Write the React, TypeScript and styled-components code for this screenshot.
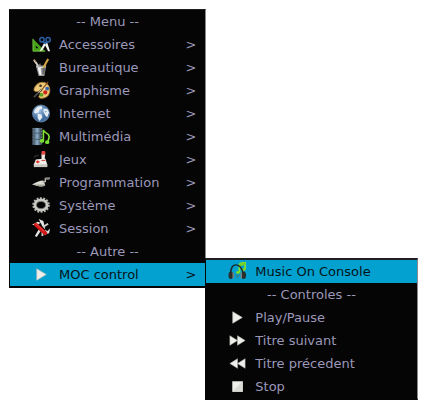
import React from "react";
import styled, { createGlobalStyle, css } from "styled-components";

const GlobalStyle = createGlobalStyle`
  * {
    box-sizing: border-box;
  }
  body {
    margin: 0;
    background: #ffffff;
    font-family: "DejaVu Sans", sans-serif;
    font-size: 13px;
    line-height: 23px;
  }
`;

const Desktop = styled.main`
  min-height: 100vh;
  padding: 9px;
`;

const panel = css`
  width: max-content;
  background: #050505;
  color: #9b98b9;
  border-style: solid;
  border-color: #202020 #8a8a8a #050505 #050505;
`;

const RootMenu = styled.nav`
  ${panel}
  border-width: 1px 1px 2px 1px;
`;

const SubMenu = styled.div`
  ${panel}
  position: absolute;
  top: -5px;
  left: 100%;
  border-width: 2px 1px 2px 1px;
`;

const List = styled.ul`
  margin: 0;
  padding: 0;
  list-style: none;
`;

const Row = styled.li`
  position: relative;
`;

const Heading = styled.h2`
  height: 23px;
  margin: 0;
  font-size: 13px;
  font-weight: 400;
  line-height: 23px;
  text-align: center;
`;

const Item = styled.button<{ $active?: boolean; $nested?: boolean }>`
  display: flex;
  align-items: center;
  gap: 8px;
  width: 100%;
  height: 23px;
  margin: 0;
  padding: 0 ${(p) => (p.$nested ? 46 : 9)}px 0 22px;
  border: 0;
  background: ${(p) => (p.$active ? "#03a1cf" : "transparent")};
  color: ${(p) => (p.$active ? "#061318" : "inherit")};
  font: inherit;
  line-height: 23px;
  text-align: left;
  white-space: nowrap;
`;

const Glyph = styled.svg`
  display: block;
  flex: none;
  width: 19px;
  height: 19px;
`;

const Label = styled.span`
  flex: 1;
`;

const Arrow = styled.span`
  padding-left: 18px;
`;

function Tools() {
  return (
    <Glyph viewBox="0 0 20 20" aria-hidden="true">
      <path fillRule="evenodd" d="M1 4 14 17H1ZM4 11v3h3Z" fill="#48a51b" />
      <path d="M1 4v13h13" fill="none" stroke="#75bd45" />
      <path d="m13 8-5 9 3-1 3-5 3 6h2l-3-9Z" fill="#f1f3ee" />
      <circle cx="10.5" cy="5" r="2.3" fill="none" stroke="#2b62a8" strokeWidth="1.5" />
      <circle cx="17" cy="5" r="2.3" fill="none" stroke="#2b62a8" strokeWidth="1.5" />
      <path d="m12 7 2 2 2-2" fill="none" stroke="#2b62a8" strokeWidth="1.6" />
    </Glyph>
  );
}

function PencilCup() {
  return (
    <Glyph viewBox="0 0 20 20" aria-hidden="true">
      <path d="m2 2 5 7" stroke="#d9d7cc" strokeWidth="2" />
      <path d="m2 1 2 3" stroke="#92631f" />
      <path d="m8 6 1 4" stroke="#666" strokeWidth="2" />
      <path d="M4 8h11l-2 11H7Z" fill="#9b9b9b" />
      <path d="M6 10h3l1 8H8Z" fill="#f4f4f4" />
      <path d="m11 10 3 0-1 7h-2Z" fill="#666" />
      <path d="M4.500 8.500c2 2 8 2 10 0" fill="none" stroke="#e2e2e2" />
      <path d="m17 1-5 9" stroke="#d3a33f" strokeWidth="2.2" />
    </Glyph>
  );
}

function Palette() {
  return (
    <Glyph viewBox="0 0 20 20" aria-hidden="true">
      <path d="M4 5C7 0 16 0 18 6c2 5 0 11-6 12-4 1-6-1-4-3 2-3-1-4-4-4C1 11 2 7 4 5Z" fill="#edc878" stroke="#a77a35" />
      <circle cx="9" cy="5" r="1.4" fill="#3c3020" />
      <path d="M11 6h3v3h-3Z" fill="#f2e5bd" />
      <circle cx="16" cy="8" r="2" fill="#3265b2" />
      <circle cx="14" cy="12" r="2.2" fill="#ce2420" />
      <circle cx="10" cy="14.5" r="2" fill="#57a424" />
      <path d="M17 1 9 11" stroke="#8a5523" strokeWidth="1.4" />
      <path d="M10 9 2 17" stroke="#4d4a46" strokeWidth="2" />
      <path d="m10 9-3 3" stroke="#d8c69a" />
    </Glyph>
  );
}

function Globe() {
  return (
    <Glyph viewBox="0 0 20 20" aria-hidden="true">
      <defs>
        <radialGradient id="globe-water" cx=".35" cy=".3">
          <stop offset="0" stopColor="#a9c9ed" />
          <stop offset="1" stopColor="#426f9f" />
        </radialGradient>
      </defs>
      <circle cx="9.500" cy="10" r="9" fill="url(#globe-water)" stroke="#7796b8" strokeWidth=".7" />
      <path d="m3 6 3-3 4-1 1 3-3 1-1 3-3 1-2-1ZM6 10l4 1 1 3-3 4-2-3ZM12 5l4 0 2 4-2 5-2-2-2-4Z" fill="#e6edf3" />
      <path d="m13 7 3 1-2 1Z" fill="#7fa4cb" />
    </Glyph>
  );
}

function Media() {
  return (
    <Glyph viewBox="0 0 20 20" aria-hidden="true">
      <defs>
        <linearGradient id="film-strip">
          <stop offset="0" stopColor="#26313b" />
          <stop offset=".5" stopColor="#8fb0cc" />
          <stop offset="1" stopColor="#17202a" />
        </linearGradient>
      </defs>
      <path d="M0 1h11v18H0Z" fill="url(#film-strip)" />
      <path d="M3 6.500h6M3 13h6" stroke="#465d73" />
      <path d="M1.500 1v18M10 1v18" stroke="#66727c" strokeWidth="1.4" strokeDasharray="1.500 1.500" />
      <path d="M12 14V3c1 4 6 3 6 7 0 3-1 3-1 5" fill="none" stroke="#83e335" strokeWidth="1.700" />
      <ellipse cx="10.500" cy="14.500" rx="2.500" ry="2" fill="#79dd31" />
      <ellipse cx="16" cy="16" rx="2.300" ry="2" fill="#79dd31" />
    </Glyph>
  );
}

function Joystick() {
  return (
    <Glyph viewBox="0 0 20 20" aria-hidden="true">
      <path d="M2 8c2-4 3 0 5-3" fill="none" stroke="#333" strokeWidth="1.2" />
      <path d="m4 10 10-1 2 6v3H2v-3Z" fill="#f1efe9" />
      <path d="M2 15h14v3H2Z" fill="#c9c7c0" />
      <path d="M10 4h4l-1 8h-3Z" fill="#eeeae2" />
      <rect x="10" y="1" width="4" height="4" rx="1" fill="#e34a42" />
      <path d="M4 12.500h4M6 11v3" stroke="#dc2923" strokeWidth="1.5" />
      <path d="M10 11h4" stroke="#c83c34" />
    </Glyph>
  );
}

function Trowel() {
  return (
    <Glyph viewBox="0 0 20 20" aria-hidden="true">
      <path d="M0 12c4-2 8-4 12-4l2 5c-3 2-7 1-14-1Z" fill="#dddcd4" />
      <path d="M1 12c5 0 9 0 13 0-2 4-7 2-13 0Z" fill="#a3a397" />
      <path d="m11 10 3-1V6h4" fill="none" stroke="#b8b6ad" strokeWidth="1.5" />
      <path d="M14 5.500h5" stroke="#85837b" strokeWidth="2" />
    </Glyph>
  );
}

function Gear() {
  return (
    <Glyph viewBox="0 0 20 20" aria-hidden="true">
      <ellipse cx="9.500" cy="9.500" rx="8" ry="7" fill="none" stroke="#b2b2ad" strokeWidth="2.500" strokeDasharray="2 1.400" />
      <ellipse cx="9.500" cy="9.500" rx="6.300" ry="5.300" fill="none" stroke="#cacac5" strokeWidth="3" />
      <ellipse cx="9.500" cy="9.500" rx="4.800" ry="3.800" fill="none" stroke="#777770" />
    </Glyph>
  );
}

function Knife() {
  return (
    <Glyph viewBox="0 0 20 20" aria-hidden="true">
      <path d="m0 6 6-3 3 1-4 3ZM7 0l5 2 2 9-3-3ZM3 18l4-7 2 2-4 6Z" fill="#e4e4e1" />
      <path d="m12 8 5-3M11 12v6" fill="none" stroke="#cbcbc6" strokeWidth="2" />
      <path d="m14 11 2 2 3-3-1 5-4 1Z" fill="#ddd" />
      <path d="m4 6 10 9" stroke="#cf1717" strokeWidth="4" strokeLinecap="round" />
      <path d="m4 5 9 8" stroke="#f34c45" />
    </Glyph>
  );
}

function Headphones() {
  return (
    <Glyph viewBox="0 0 20 20" aria-hidden="true">
      <path d="m12 2 6-2v8M12 2v9" fill="none" stroke="#84e52d" strokeWidth="1.800" />
      <path d="m12 2 6-2v3l-6 2Z" fill="#72cf29" />
      <ellipse cx="10.500" cy="11" rx="2" ry="1.500" fill="#79dc25" />
      <ellipse cx="16.500" cy="8" rx="2" ry="1.500" fill="#79dc25" />
      <path d="M3 12C2 0 14 0 16 12" fill="none" stroke="#202829" strokeWidth="1.500" />
      <ellipse cx="3" cy="14" rx="2.500" ry="4" fill="#292d2c" />
      <ellipse cx="16.500" cy="14" rx="2.500" ry="4" fill="#292d2c" />
      <path d="M5.500 11v6m8.500-6v6" stroke="#77827f" strokeWidth="1.600" />
      <path d="m7 15 2-2 1 4 2-4" fill="none" stroke="#3d7786" />
    </Glyph>
  );
}

function Play() {
  return (
    <Glyph viewBox="0 0 20 20" aria-hidden="true">
      <path d="m5 4 10 6-10 6Z" fill="#eeeeeb" stroke="#c0c0bb" strokeWidth=".7" />
    </Glyph>
  );
}

function Forward() {
  return (
    <Glyph viewBox="0 0 20 20" aria-hidden="true">
      <path d="m2 5 8 5-8 5Zm8 0 8 5-8 5Z" fill="#eeeeeb" stroke="#b9b9b4" strokeWidth=".6" />
    </Glyph>
  );
}

function Rewind() {
  return (
    <Glyph viewBox="0 0 20 20" aria-hidden="true">
      <path d="m10 5-8 5 8 5Zm8 0-8 5 8 5Z" fill="#eeeeeb" stroke="#b9b9b4" strokeWidth=".6" />
    </Glyph>
  );
}

function Stop() {
  return (
    <Glyph viewBox="0 0 20 20" aria-hidden="true">
      <path d="M4.500 4.500h11v11h-11Z" fill="#eeeeeb" />
      <path d="M15.500 4.500v11h-11Z" fill="#dadad5" />
    </Glyph>
  );
}

type Entry = { label: string; icon: () => React.ReactElement };

const categories: Entry[] = [
  { label: "Accessoires", icon: Tools },
  { label: "Bureautique", icon: PencilCup },
  { label: "Graphisme", icon: Palette },
  { label: "Internet", icon: Globe },
  { label: "Multimédia", icon: Media },
  { label: "Jeux", icon: Joystick },
  { label: "Programmation", icon: Trowel },
  { label: "Système", icon: Gear },
  { label: "Session", icon: Knife },
];

const controls: Entry[] = [
  { label: "Play/Pause", icon: Play },
  { label: "Titre suivant", icon: Forward },
  { label: "Titre précedent", icon: Rewind },
  { label: "Stop", icon: Stop },
];

export default function App() {
  return (
    <>
      <GlobalStyle />
      <Desktop>
        <RootMenu>
          <List>
            <Row><Heading>-- Menu --</Heading></Row>
            {categories.map(({ label, icon: Icon }) => (
              <Row key={label}>
                <Item type="button" aria-haspopup="menu">
                  <Icon />
                  <Label>{label}</Label>
                  <Arrow aria-hidden="true">&gt;</Arrow>
                </Item>
              </Row>
            ))}
            <Row><Heading>-- Autre --</Heading></Row>
            <Row>
              <Item type="button" $active aria-haspopup="menu" aria-expanded="true">
                <Play />
                <Label>MOC control</Label>
                <Arrow aria-hidden="true">&gt;</Arrow>
              </Item>
              <SubMenu>
                <List>
                  <Row>
                    <Item type="button" $active $nested>
                      <Headphones />
                      <Label>Music On Console</Label>
                    </Item>
                  </Row>
                  <Row><Heading>-- Controles --</Heading></Row>
                  {controls.map(({ label, icon: Icon }) => (
                    <Row key={label}>
                      <Item type="button" $nested>
                        <Icon />
                        <Label>{label}</Label>
                      </Item>
                    </Row>
                  ))}
                </List>
              </SubMenu>
            </Row>
          </List>
        </RootMenu>
      </Desktop>
    </>
  );
}
